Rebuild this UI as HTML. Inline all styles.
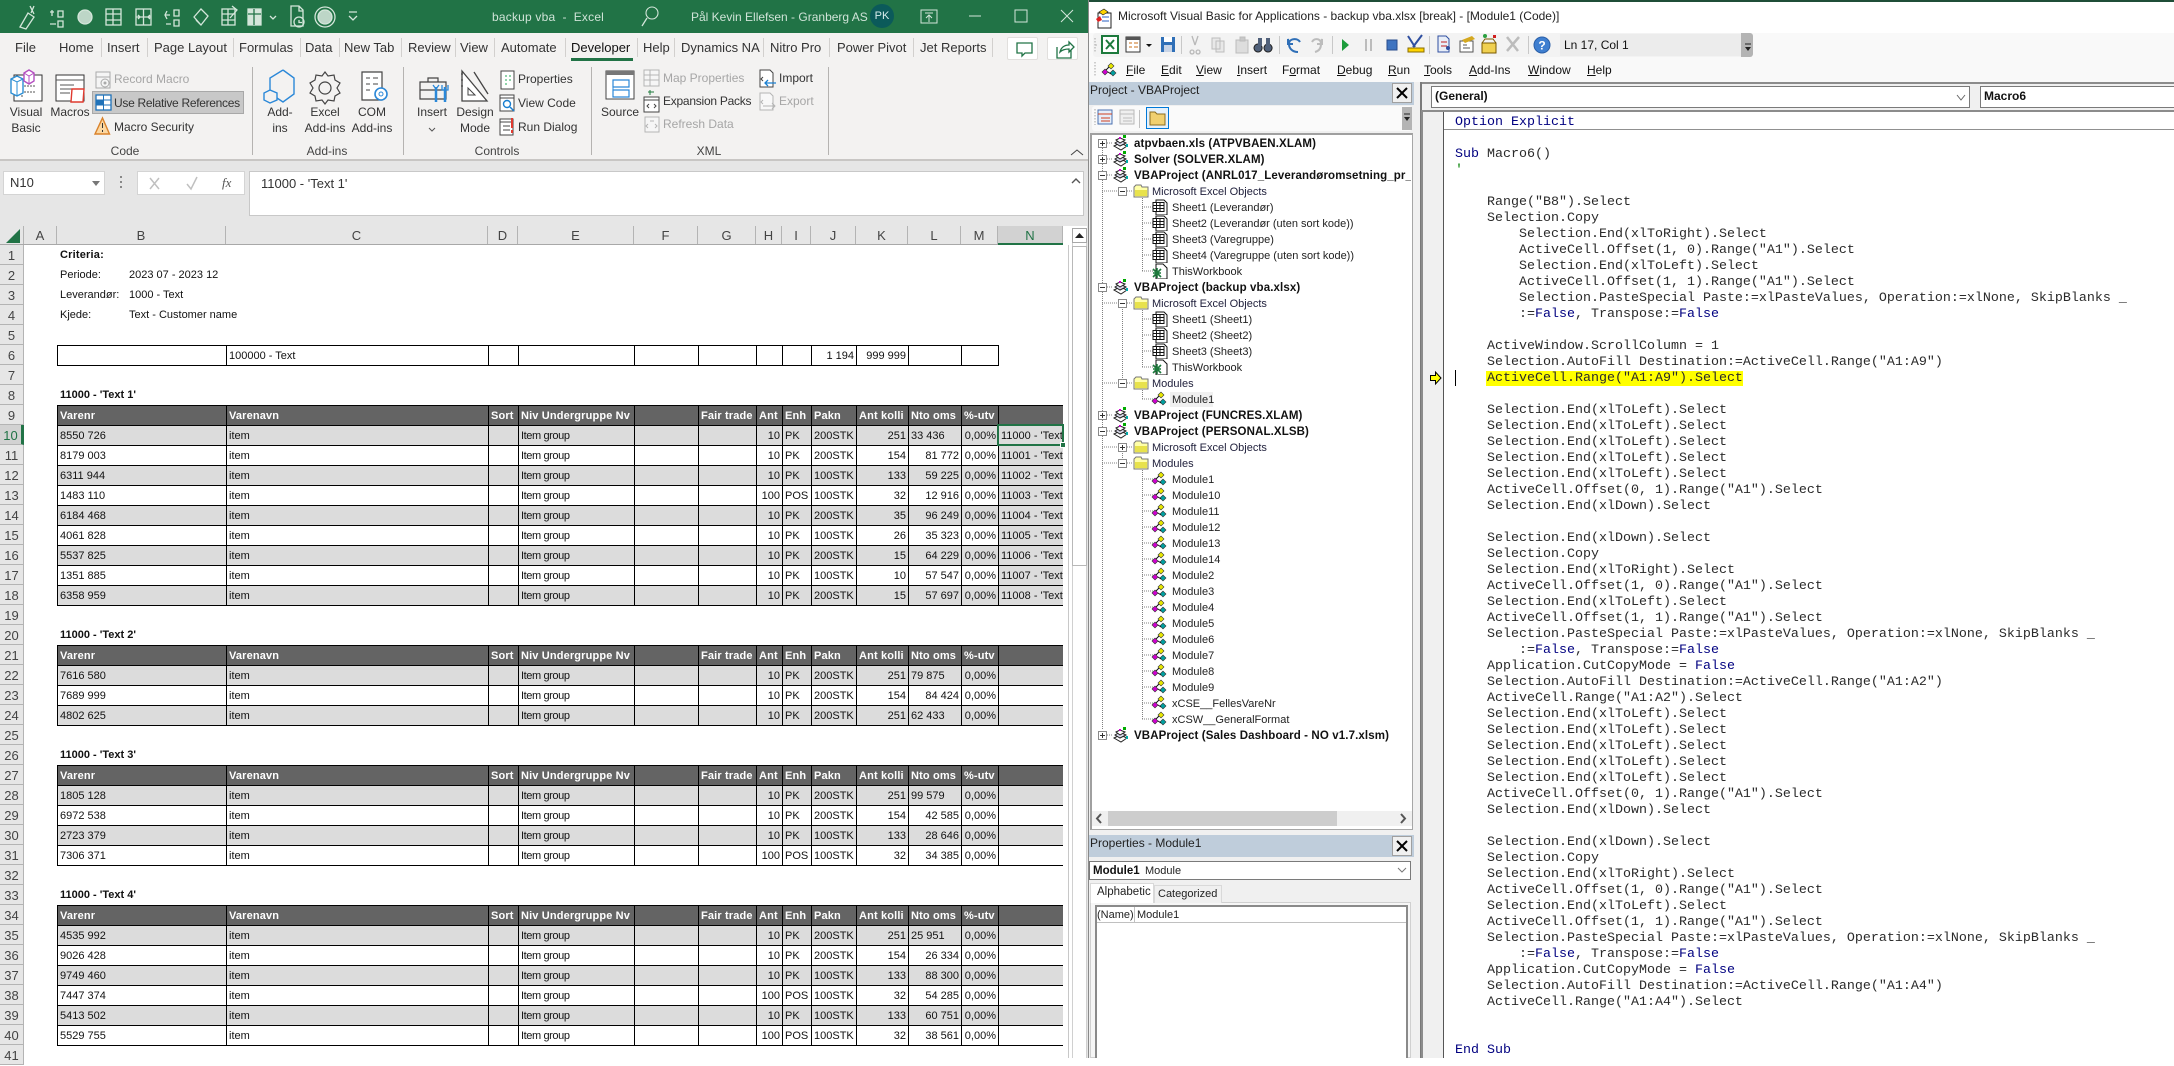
<!DOCTYPE html>
<html><head><meta charset="utf-8"><title>backup vba - Excel</title>
<style>
*{box-sizing:border-box}
html,body{margin:0;padding:0}
body{width:2174px;height:1058px;overflow:hidden;background:#fff;font:12px "Liberation Sans",sans-serif;position:relative;color:#222}
.a{position:absolute}
.t{position:absolute;white-space:nowrap;line-height:16px}
.c{transform:translateX(-50%)}
.g{position:absolute;left:57px;border-collapse:separate;border-spacing:0;table-layout:fixed;width:1006px;font-size:11px;color:#111}
.g td{height:20px;padding:0 2px;border-left:1px solid #000;border-top:1px solid #000;overflow:hidden;white-space:nowrap;line-height:18px}
.g tr:last-child td{border-bottom:1px solid #000;height:21px}
.g .h td{background:#646464;color:#fff;font-weight:bold;letter-spacing:.15px}
.g .z td{background:#dcdcdc}
.g .r{text-align:right}
.g td.n{background:#dcdcdc}
.g tr:not(.h) td:nth-child(4){letter-spacing:-.4px}
.tb{font-size:13px;color:#333}
.rb{font-size:12px;color:#333}
.dis{color:#a6a6a6}
.grp{font-size:12px;color:#444}
#rh{position:absolute;left:0;top:245px;width:24px}
#rh div{height:20px;background:#e6e6e6;border-bottom:1px solid #b4b4b4;border-right:1px solid #b4b4b4;text-align:center;font-size:13px;line-height:21px;color:#444}
#rh div.s{background:#d2d2d2;color:#217346;border-right:3px solid #217346}
#ch{position:absolute;left:0;top:226px;height:19px;display:flex;background:#e6e6e6;border-bottom:1px solid #a8a8a8;width:1063px}
#ch div{height:18px;border-right:1px solid #b4b4b4;text-align:center;font-size:13px;line-height:19px;color:#444}
.m{font-size:12px;color:#111}
.m u{text-decoration:underline}
.tr{font-size:11px;color:#222;margin-top:1px}
.tr.b{font-size:11.5px;font-weight:bold;color:#111;letter-spacing:.12px}
.tr.k{color:#1e1e3a}
pre{position:absolute;margin:0;left:1455px;top:115px;font:13.333px/16px "Liberation Mono",monospace;color:#2a2a2a}
pre b{font-weight:normal;color:#000080}
pre i{font-style:normal;color:#008000}
</style></head><body>

<!-- EXCEL CHROME -->
<div class="a" style="left:0;top:0;width:1089px;height:33px;background:#217346"></div>
<div class="a" style="left:0;top:33px;width:1089px;height:126px;background:#f3f2f1"></div>
<div class="a" style="left:0;top:159px;width:1089px;height:2px;background:#c8c6c4"></div>
<div class="a" style="left:0;top:161px;width:1089px;height:65px;background:#e6e6e6"></div>
<div class="t" style="left:492px;top:9px;color:#cfe3d7;font-size:12px;letter-spacing:.2px">backup vba&nbsp; -&nbsp; Excel</div>
<div class="t" style="left:691px;top:9px;color:#cfe3d7;font-size:12px">Pål Kevin Ellefsen - Granberg AS</div>
<div class="a" style="left:870px;top:4px;width:24px;height:24px;border-radius:50%;background:#0b5a5a"></div>
<div class="t c" style="left:882px;top:8px;color:#d8ecec;font-size:11px">PK</div>

<div class="t tb" style="left:15px;top:40px">File</div>
<div class="t tb" style="left:59px;top:40px">Home</div>
<div class="t tb" style="left:107px;top:40px">Insert</div>
<div class="t tb" style="left:154px;top:40px">Page Layout</div>
<div class="t tb" style="left:239px;top:40px">Formulas</div>
<div class="t tb" style="left:305px;top:40px">Data</div>
<div class="t tb" style="left:344px;top:40px">New Tab</div>
<div class="t tb" style="left:408px;top:40px">Review</div>
<div class="t tb" style="left:460px;top:40px">View</div>
<div class="t tb" style="left:501px;top:40px">Automate</div>
<div class="t tb" style="left:571px;top:40px;color:#111">Developer</div>
<div class="t tb" style="left:643px;top:40px">Help</div>
<div class="t tb" style="left:681px;top:40px;width:82px;overflow:hidden">Dynamics NA</div>
<div class="t tb" style="left:770px;top:40px">Nitro Pro</div>
<div class="t tb" style="left:837px;top:40px">Power Pivot</div>
<div class="t tb" style="left:920px;top:40px">Jet Reports</div>
<div class="a" style="left:571px;top:58px;width:62px;height:3px;background:#217346"></div>
<div class="a" style="left:1007px;top:37px;width:31px;height:23px;background:#fff;border:1px solid #e1dfdd;border-radius:2px"></div>
<div class="a" style="left:1047px;top:37px;width:31px;height:23px;background:#fff;border:1px solid #e1dfdd;border-radius:2px"></div>

<!-- Ribbon labels -->
<div class="t rb c" style="left:26px;top:104px">Visual</div><div class="t rb c" style="left:26px;top:120px">Basic</div>
<div class="t rb c" style="left:70px;top:104px">Macros</div>
<div class="a" style="left:92px;top:91px;width:152px;height:23px;background:#c8c8c8;border:1px solid #a8a8a8"></div>
<div class="t rb dis" style="left:114px;top:71px">Record Macro</div>
<div class="t rb" style="left:114px;top:95px;letter-spacing:-.3px">Use Relative References</div>
<div class="t rb" style="left:114px;top:119px">Macro Security</div>
<div class="t grp c" style="left:125px;top:143px">Code</div>
<div class="t rb c" style="left:280px;top:104px">Add-</div><div class="t rb c" style="left:280px;top:120px">ins</div>
<div class="t rb c" style="left:325px;top:104px">Excel</div><div class="t rb c" style="left:325px;top:120px">Add-ins</div>
<div class="t rb c" style="left:372px;top:104px">COM</div><div class="t rb c" style="left:372px;top:120px">Add-ins</div>
<div class="t grp c" style="left:327px;top:143px">Add-ins</div>
<div class="t rb c" style="left:432px;top:104px">Insert</div>
<div class="t rb c" style="left:475px;top:104px">Design</div><div class="t rb c" style="left:475px;top:120px">Mode</div>
<div class="t rb" style="left:518px;top:71px">Properties</div>
<div class="t rb" style="left:518px;top:95px">View Code</div>
<div class="t rb" style="left:518px;top:119px">Run Dialog</div>
<div class="t grp c" style="left:497px;top:143px">Controls</div>
<div class="t rb c" style="left:620px;top:104px">Source</div>
<div class="t rb dis" style="left:663px;top:70px">Map Properties</div>
<div class="t rb" style="left:663px;top:93px;letter-spacing:-.25px">Expansion Packs</div>
<div class="t rb dis" style="left:663px;top:116px">Refresh Data</div>
<div class="t rb" style="left:779px;top:70px">Import</div>
<div class="t rb dis" style="left:779px;top:93px">Export</div>
<div class="t grp c" style="left:709px;top:143px">XML</div>

<!-- Formula bar -->
<div class="a" style="left:3px;top:171px;width:102px;height:24px;background:#fff;border:1px solid #d4d4d4"></div>
<div class="t" style="left:10px;top:175px;font-size:13px;color:#333">N10</div>
<div class="a" style="left:137px;top:171px;width:108px;height:24px;background:#fff;border:1px solid #d4d4d4"></div>
<div class="t" style="left:222px;top:175px;font:italic 13px 'Liberation Serif',serif;color:#555">fx</div>
<div class="a" style="left:249px;top:171px;width:835px;height:45px;background:#fff;border:1px solid #c8c8c8"></div>
<div class="t" style="left:261px;top:176px;font-size:13px;color:#333">11000 - 'Text 1'</div>

<!-- Sheet headers -->
<div id="ch"><div style="width:24px"></div><div style="width:33px">A</div><div style="width:169px">B</div><div style="width:262px">C</div><div style="width:30px">D</div><div style="width:116px">E</div><div style="width:64px">F</div><div style="width:58px">G</div><div style="width:26px">H</div><div style="width:29px">I</div><div style="width:45px">J</div><div style="width:52px">K</div><div style="width:53px">L</div><div style="width:37px">M</div><div style="width:65px;background:#d2d2d2;color:#217346">N</div></div>
<div class="a" style="left:998px;top:243px;width:65px;height:2px;background:#217346"></div>
<div id="rh"><div>1</div><div>2</div><div>3</div><div>4</div><div>5</div><div>6</div><div>7</div><div>8</div><div>9</div><div class="s">10</div><div>11</div><div>12</div><div>13</div><div>14</div><div>15</div><div>16</div><div>17</div><div>18</div><div>19</div><div>20</div><div>21</div><div>22</div><div>23</div><div>24</div><div>25</div><div>26</div><div>27</div><div>28</div><div>29</div><div>30</div><div>31</div><div>32</div><div>33</div><div>34</div><div>35</div><div>36</div><div>37</div><div>38</div><div>39</div><div>40</div><div>41</div></div>
<div class="a" style="left:1068px;top:245px;width:1px;height:813px;background:#c8c8c8"></div>
<div class="a" style="left:1072px;top:228px;width:15px;height:830px;background:#fff;border:1px solid #d0d0d0;border-top:none;border-bottom:none"></div>
<div class="a" style="left:1072px;top:228px;width:15px;height:15px;background:#fff;border:1px solid #a8a8a8"></div>
<div class="a" style="left:1072px;top:246px;width:15px;height:320px;background:#fff;border:1px solid #b8b8b8"></div>
<div class="a" style="left:1087px;top:226px;width:2px;height:832px;background:#e6e6e6"></div>

<!-- Sheet content -->
<div class="t" style="left:60px;top:247px;font-size:11px;font-weight:bold;color:#111;letter-spacing:.2px">Criteria:</div>
<div class="t" style="left:60px;top:267px;font-size:11px;color:#111">Periode:</div><div class="t" style="left:129px;top:267px;font-size:11px;color:#111">2023 07 - 2023 12</div>
<div class="t" style="left:60px;top:287px;font-size:11px;color:#111">Leverandør:</div><div class="t" style="left:129px;top:287px;font-size:11px;color:#111">1000 - Text</div>
<div class="t" style="left:60px;top:307px;font-size:11px;color:#111">Kjede:</div><div class="t" style="left:129px;top:307px;font-size:11px;color:#111">Text - Customer name</div>

<table class="g" style="top:345px;width:942px"><colgroup><col style="width:169px"><col style="width:262px"><col style="width:30px"><col style="width:116px"><col style="width:64px"><col style="width:58px"><col style="width:26px"><col style="width:29px"><col style="width:45px"><col style="width:52px"><col style="width:53px"><col style="width:38px"></colgroup>
<tr><td></td><td>100000 - Text</td><td></td><td></td><td></td><td></td><td></td><td></td><td class="r">1 194</td><td class="r">999 999</td><td></td><td style="border-right:1px solid #000"></td></tr></table>

<div class="t" style="left:60px;top:387px;font-size:11px;font-weight:bold;color:#111">11000 - 'Text 1'</div>
<table class="g" style="top:405px"><colgroup><col style="width:169px"><col style="width:262px"><col style="width:30px"><col style="width:116px"><col style="width:64px"><col style="width:58px"><col style="width:26px"><col style="width:29px"><col style="width:45px"><col style="width:52px"><col style="width:53px"><col style="width:37px"><col style="width:65px"></colgroup>
<tr class="h"><td>Varenr</td><td>Varenavn</td><td>Sort</td><td>Niv Undergruppe Nv</td><td></td><td>Fair trade</td><td>Ant</td><td>Enh</td><td>Pakn</td><td>Ant kolli</td><td>Nto oms</td><td>%-utv</td><td></td></tr>
<tr class="z"><td>8550 726</td><td>item</td><td></td><td>Item group</td><td></td><td></td><td class="r">10</td><td>PK</td><td>200STK</td><td class="r">251</td><td>33 436</td><td class="r">0,00%</td><td class="n">11000 - 'Text 1'</td></tr>
<tr><td>8179 003</td><td>item</td><td></td><td>Item group</td><td></td><td></td><td class="r">10</td><td>PK</td><td>200STK</td><td class="r">154</td><td class="r">81 772</td><td class="r">0,00%</td><td class="n">11001 - 'Text 2'</td></tr>
<tr class="z"><td>6311 944</td><td>item</td><td></td><td>Item group</td><td></td><td></td><td class="r">10</td><td>PK</td><td>100STK</td><td class="r">133</td><td class="r">59 225</td><td class="r">0,00%</td><td class="n">11002 - 'Text 3'</td></tr>
<tr><td>1483 110</td><td>item</td><td></td><td>Item group</td><td></td><td></td><td class="r">100</td><td>POS</td><td>100STK</td><td class="r">32</td><td class="r">12 916</td><td class="r">0,00%</td><td class="n">11003 - 'Text 4'</td></tr>
<tr class="z"><td>6184 468</td><td>item</td><td></td><td>Item group</td><td></td><td></td><td class="r">10</td><td>PK</td><td>200STK</td><td class="r">35</td><td class="r">96 249</td><td class="r">0,00%</td><td class="n">11004 - 'Text 5'</td></tr>
<tr><td>4061 828</td><td>item</td><td></td><td>Item group</td><td></td><td></td><td class="r">10</td><td>PK</td><td>100STK</td><td class="r">26</td><td class="r">35 323</td><td class="r">0,00%</td><td class="n">11005 - 'Text 6'</td></tr>
<tr class="z"><td>5537 825</td><td>item</td><td></td><td>Item group</td><td></td><td></td><td class="r">10</td><td>PK</td><td>200STK</td><td class="r">15</td><td class="r">64 229</td><td class="r">0,00%</td><td class="n">11006 - 'Text 7'</td></tr>
<tr><td>1351 885</td><td>item</td><td></td><td>Item group</td><td></td><td></td><td class="r">10</td><td>PK</td><td>100STK</td><td class="r">10</td><td class="r">57 547</td><td class="r">0,00%</td><td class="n">11007 - 'Text 8'</td></tr>
<tr class="z"><td>6358 959</td><td>item</td><td></td><td>Item group</td><td></td><td></td><td class="r">10</td><td>PK</td><td>200STK</td><td class="r">15</td><td class="r">57 697</td><td class="r">0,00%</td><td class="n">11008 - 'Text 9'</td></tr>
</table>
<div class="a" style="left:997px;top:424px;width:67px;height:22px;border:2px solid #217346"></div>
<div class="a" style="left:1060px;top:442px;width:6px;height:6px;background:#217346;border:1px solid #fff"></div>

<div class="t" style="left:60px;top:627px;font-size:11px;font-weight:bold;color:#111">11000 - 'Text 2'</div>
<table class="g" style="top:645px"><colgroup><col style="width:169px"><col style="width:262px"><col style="width:30px"><col style="width:116px"><col style="width:64px"><col style="width:58px"><col style="width:26px"><col style="width:29px"><col style="width:45px"><col style="width:52px"><col style="width:53px"><col style="width:37px"><col style="width:65px"></colgroup>
<tr class="h"><td>Varenr</td><td>Varenavn</td><td>Sort</td><td>Niv Undergruppe Nv</td><td></td><td>Fair trade</td><td>Ant</td><td>Enh</td><td>Pakn</td><td>Ant kolli</td><td>Nto oms</td><td>%-utv</td><td></td></tr>
<tr class="z"><td>7616 580</td><td>item</td><td></td><td>Item group</td><td></td><td></td><td class="r">10</td><td>PK</td><td>200STK</td><td class="r">251</td><td>79 875</td><td class="r">0,00%</td><td></td></tr>
<tr><td>7689 999</td><td>item</td><td></td><td>Item group</td><td></td><td></td><td class="r">10</td><td>PK</td><td>200STK</td><td class="r">154</td><td class="r">84 424</td><td class="r">0,00%</td><td></td></tr>
<tr class="z"><td>4802 625</td><td>item</td><td></td><td>Item group</td><td></td><td></td><td class="r">10</td><td>PK</td><td>200STK</td><td class="r">251</td><td>62 433</td><td class="r">0,00%</td><td></td></tr>
</table>

<div class="t" style="left:60px;top:747px;font-size:11px;font-weight:bold;color:#111">11000 - 'Text 3'</div>
<table class="g" style="top:765px"><colgroup><col style="width:169px"><col style="width:262px"><col style="width:30px"><col style="width:116px"><col style="width:64px"><col style="width:58px"><col style="width:26px"><col style="width:29px"><col style="width:45px"><col style="width:52px"><col style="width:53px"><col style="width:37px"><col style="width:65px"></colgroup>
<tr class="h"><td>Varenr</td><td>Varenavn</td><td>Sort</td><td>Niv Undergruppe Nv</td><td></td><td>Fair trade</td><td>Ant</td><td>Enh</td><td>Pakn</td><td>Ant kolli</td><td>Nto oms</td><td>%-utv</td><td></td></tr>
<tr class="z"><td>1805 128</td><td>item</td><td></td><td>Item group</td><td></td><td></td><td class="r">10</td><td>PK</td><td>200STK</td><td class="r">251</td><td>99 579</td><td class="r">0,00%</td><td></td></tr>
<tr><td>6972 538</td><td>item</td><td></td><td>Item group</td><td></td><td></td><td class="r">10</td><td>PK</td><td>200STK</td><td class="r">154</td><td class="r">42 585</td><td class="r">0,00%</td><td></td></tr>
<tr class="z"><td>2723 379</td><td>item</td><td></td><td>Item group</td><td></td><td></td><td class="r">10</td><td>PK</td><td>100STK</td><td class="r">133</td><td class="r">28 646</td><td class="r">0,00%</td><td></td></tr>
<tr><td>7306 371</td><td>item</td><td></td><td>Item group</td><td></td><td></td><td class="r">100</td><td>POS</td><td>100STK</td><td class="r">32</td><td class="r">34 385</td><td class="r">0,00%</td><td></td></tr>
</table>

<div class="t" style="left:60px;top:887px;font-size:11px;font-weight:bold;color:#111">11000 - 'Text 4'</div>
<table class="g" style="top:905px"><colgroup><col style="width:169px"><col style="width:262px"><col style="width:30px"><col style="width:116px"><col style="width:64px"><col style="width:58px"><col style="width:26px"><col style="width:29px"><col style="width:45px"><col style="width:52px"><col style="width:53px"><col style="width:37px"><col style="width:65px"></colgroup>
<tr class="h"><td>Varenr</td><td>Varenavn</td><td>Sort</td><td>Niv Undergruppe Nv</td><td></td><td>Fair trade</td><td>Ant</td><td>Enh</td><td>Pakn</td><td>Ant kolli</td><td>Nto oms</td><td>%-utv</td><td></td></tr>
<tr class="z"><td>4535 992</td><td>item</td><td></td><td>Item group</td><td></td><td></td><td class="r">10</td><td>PK</td><td>200STK</td><td class="r">251</td><td>25 951</td><td class="r">0,00%</td><td></td></tr>
<tr><td>9026 428</td><td>item</td><td></td><td>Item group</td><td></td><td></td><td class="r">10</td><td>PK</td><td>200STK</td><td class="r">154</td><td class="r">26 334</td><td class="r">0,00%</td><td></td></tr>
<tr class="z"><td>9749 460</td><td>item</td><td></td><td>Item group</td><td></td><td></td><td class="r">10</td><td>PK</td><td>100STK</td><td class="r">133</td><td class="r">88 300</td><td class="r">0,00%</td><td></td></tr>
<tr><td>7447 374</td><td>item</td><td></td><td>Item group</td><td></td><td></td><td class="r">100</td><td>POS</td><td>100STK</td><td class="r">32</td><td class="r">54 285</td><td class="r">0,00%</td><td></td></tr>
<tr class="z"><td>5413 502</td><td>item</td><td></td><td>Item group</td><td></td><td></td><td class="r">10</td><td>PK</td><td>100STK</td><td class="r">133</td><td class="r">60 751</td><td class="r">0,00%</td><td></td></tr>
<tr><td>5529 755</td><td>item</td><td></td><td>Item group</td><td></td><td></td><td class="r">100</td><td>POS</td><td>100STK</td><td class="r">32</td><td class="r">38 561</td><td class="r">0,00%</td><td></td></tr>
</table>

<!-- VBE -->
<div class="a" style="left:1089px;top:0;width:1085px;height:2px;background:#1f4d38"></div>
<div class="a" style="left:1089px;top:2px;width:1085px;height:31px;background:#fff"></div>
<div class="a" style="left:1089px;top:33px;width:1085px;height:49px;background:#f9f9f9"></div>
<div class="a" style="left:1089px;top:82px;width:1085px;height:976px;background:#f0f0f0"></div>
<div class="a" style="left:1088px;top:0;width:1px;height:1058px;background:#8a8a8a"></div>
<div class="t" style="left:1118px;top:8px;font-size:12px;color:#222">Microsoft Visual Basic for Applications - backup vba.xlsx [break] - [Module1 (Code)]</div>
<div class="a" style="left:1093px;top:33px;width:660px;height:24px;background:#f3f3f3;border-radius:3px"></div>
<div class="a" style="left:1560px;top:34px;width:181px;height:22px;background:#ececec"></div>
<div class="a" style="left:1741px;top:33px;width:12px;height:24px;background:#b4b4b4;border-radius:0 3px 3px 0"></div>
<div class="t" style="left:1564px;top:37px;font-size:12px;color:#111">Ln 17, Col 1</div>
<div class="t m" style="left:1126px;top:62px"><u>F</u>ile</div>
<div class="t m" style="left:1161px;top:62px"><u>E</u>dit</div>
<div class="t m" style="left:1196px;top:62px"><u>V</u>iew</div>
<div class="t m" style="left:1237px;top:62px"><u>I</u>nsert</div>
<div class="t m" style="left:1282px;top:62px">F<u>o</u>rmat</div>
<div class="t m" style="left:1337px;top:62px"><u>D</u>ebug</div>
<div class="t m" style="left:1388px;top:62px"><u>R</u>un</div>
<div class="t m" style="left:1424px;top:62px"><u>T</u>ools</div>
<div class="t m" style="left:1469px;top:62px"><u>A</u>dd-Ins</div>
<div class="t m" style="left:1528px;top:62px"><u>W</u>indow</div>
<div class="t m" style="left:1587px;top:62px"><u>H</u>elp</div>

<!-- Project pane -->
<div class="a" style="left:1089px;top:82px;width:325px;height:23px;background:#bfcddb"></div>
<div class="t" style="left:1090px;top:82px;font-size:12px;color:#222">Project - VBAProject</div>
<div class="a" style="left:1392px;top:83px;width:20px;height:20px;background:#f0f0f0;border:1px solid #a0a0a0"></div>
<div class="a" style="left:1092px;top:106px;width:320px;height:25px;background:#fafafa;border-radius:3px"></div>
<div class="a" style="left:1402px;top:107px;width:10px;height:23px;background:#b4b4b4"></div>
<div class="a" style="left:1146px;top:107px;width:23px;height:22px;background:#e5f1fb;border:1px solid #0078d7"></div>
<div class="a" style="left:1090px;top:133px;width:323px;height:697px;background:#fff;border:1px solid #a6a6a6;border-top:2px solid #a0a0a0;border-left:2px solid #a0a0a0"></div>
<div class="a" style="left:1170px;top:392px;width:43px;height:15px;background:#f0f0f0"></div>

<div class="t tr b" style="left:1134px;top:135px">atpvbaen.xls (ATPVBAEN.XLAM)</div>
<div class="t tr b" style="left:1134px;top:151px">Solver (SOLVER.XLAM)</div>
<div class="t tr b" style="left:1134px;top:167px;width:277px;overflow:hidden">VBAProject (ANRL017_Leverandøromsetning_pr_kunde.xlsx)</div>
<div class="t tr k" style="left:1152px;top:183px">Microsoft Excel Objects</div>
<div class="t tr" style="left:1172px;top:199px">Sheet1 (Leverandør)</div>
<div class="t tr" style="left:1172px;top:215px">Sheet2 (Leverandør (uten sort kode))</div>
<div class="t tr" style="left:1172px;top:231px">Sheet3 (Varegruppe)</div>
<div class="t tr" style="left:1172px;top:247px">Sheet4 (Varegruppe (uten sort kode))</div>
<div class="t tr" style="left:1172px;top:263px">ThisWorkbook</div>
<div class="t tr b" style="left:1134px;top:279px">VBAProject (backup vba.xlsx)</div>
<div class="t tr k" style="left:1152px;top:295px">Microsoft Excel Objects</div>
<div class="t tr" style="left:1172px;top:311px">Sheet1 (Sheet1)</div>
<div class="t tr" style="left:1172px;top:327px">Sheet2 (Sheet2)</div>
<div class="t tr" style="left:1172px;top:343px">Sheet3 (Sheet3)</div>
<div class="t tr" style="left:1172px;top:359px">ThisWorkbook</div>
<div class="t tr k" style="left:1152px;top:375px">Modules</div>
<div class="t tr" style="left:1172px;top:391px">Module1</div>
<div class="t tr b" style="left:1134px;top:407px">VBAProject (FUNCRES.XLAM)</div>
<div class="t tr b" style="left:1134px;top:423px">VBAProject (PERSONAL.XLSB)</div>
<div class="t tr k" style="left:1152px;top:439px">Microsoft Excel Objects</div>
<div class="t tr k" style="left:1152px;top:455px">Modules</div>
<div class="t tr" style="left:1172px;top:471px">Module1</div>
<div class="t tr" style="left:1172px;top:487px">Module10</div>
<div class="t tr" style="left:1172px;top:503px">Module11</div>
<div class="t tr" style="left:1172px;top:519px">Module12</div>
<div class="t tr" style="left:1172px;top:535px">Module13</div>
<div class="t tr" style="left:1172px;top:551px">Module14</div>
<div class="t tr" style="left:1172px;top:567px">Module2</div>
<div class="t tr" style="left:1172px;top:583px">Module3</div>
<div class="t tr" style="left:1172px;top:599px">Module4</div>
<div class="t tr" style="left:1172px;top:615px">Module5</div>
<div class="t tr" style="left:1172px;top:631px">Module6</div>
<div class="t tr" style="left:1172px;top:647px">Module7</div>
<div class="t tr" style="left:1172px;top:663px">Module8</div>
<div class="t tr" style="left:1172px;top:679px">Module9</div>
<div class="t tr" style="left:1172px;top:695px">xCSE__FellesVareNr</div>
<div class="t tr" style="left:1172px;top:711px">xCSW__GeneralFormat</div>
<div class="t tr b" style="left:1134px;top:727px">VBAProject (Sales Dashboard - NO v1.7.xlsm)</div>

<div class="a" style="left:1092px;top:811px;width:320px;height:15px;background:#f0f0f0"></div>
<div class="a" style="left:1108px;top:811px;width:229px;height:15px;background:#cdcdcd"></div>

<!-- Properties pane -->
<div class="a" style="left:1089px;top:835px;width:325px;height:22px;background:#bfcddb"></div>
<div class="t" style="left:1090px;top:835px;font-size:12px;color:#222">Properties - Module1</div>
<div class="a" style="left:1392px;top:836px;width:20px;height:20px;background:#f0f0f0;border:1px solid #a0a0a0"></div>
<div class="a" style="left:1089px;top:861px;width:322px;height:19px;background:#fff;border:1px solid #7a7a7a"></div>
<div class="t" style="left:1093px;top:863px;font-size:11.5px;font-weight:bold;color:#111">Module1</div>
<div class="t" style="left:1145px;top:863px;font-size:11px;color:#222">Module</div>
<div class="a" style="left:1090px;top:902px;width:321px;height:156px;background:#f6f6f6;border:1px solid #d0d0d0"></div>
<div class="a" style="left:1154px;top:885px;width:68px;height:18px;background:#f0f0f0;border:1px solid #d9d9d9;border-bottom:none"></div>
<div class="a" style="left:1090px;top:883px;width:64px;height:20px;background:#fff;border:1px solid #d9d9d9;border-bottom:none"></div>
<div class="t" style="left:1097px;top:884px;font-size:11.5px;color:#222">Alphabetic</div>
<div class="t" style="left:1158px;top:886px;font-size:11px;color:#222">Categorized</div>
<div class="a" style="left:1095px;top:905px;width:313px;height:153px;background:#fff;border:2px solid #8a8a8a;border-bottom:none"></div>
<div class="a" style="left:1097px;top:922px;width:309px;height:1px;background:#c0c0c0"></div>
<div class="a" style="left:1134px;top:907px;width:1px;height:15px;background:#c0c0c0"></div>
<div class="t" style="left:1097px;top:907px;font-size:11px;color:#222">(Name)</div>
<div class="t" style="left:1137px;top:907px;font-size:11px;color:#222">Module1</div>

<div class="a" style="left:1420px;top:82px;width:2px;height:976px;background:#7a7a7a"></div>

<!-- Code pane -->
<div class="a" style="left:1422px;top:82px;width:752px;height:2px;background:#8c8c8c"></div>
<div class="a" style="left:1431px;top:86px;width:539px;height:22px;background:#fff;border:1px solid #7a7a7a"></div>
<div class="t" style="left:1435px;top:88px;font-size:12px;font-weight:bold;color:#111">(General)</div>
<div class="a" style="left:1980px;top:86px;width:194px;height:22px;background:#fff;border:1px solid #7a7a7a;border-right:none"></div>
<div class="t" style="left:1984px;top:88px;font-size:12px;font-weight:bold;color:#111">Macro6</div>
<div class="a" style="left:1421px;top:110px;width:753px;height:948px;background:#fff;border-top:2px solid #8c8c8c;border-left:2px solid #8c8c8c"></div>
<div class="a" style="left:1423px;top:112px;width:20px;height:946px;background:#f0f0f0"></div>
<div class="a" style="left:1443px;top:112px;width:1px;height:946px;background:#555"></div>
<div class="a" style="left:1444px;top:129px;width:730px;height:1px;background:#909090"></div>
<div class="a" style="left:1486px;top:371px;width:257px;height:15px;background:#ffff00"></div>
<div class="a" style="left:1455px;top:370px;width:1px;height:16px;background:#000"></div>
<pre><b>Option Explicit</b>

<b>Sub</b> Macro6()
<i>'</i>

    Range("B8").Select
    Selection.Copy
        Selection.End(xlToRight).Select
        ActiveCell.Offset(1, 0).Range("A1").Select
        Selection.End(xlToLeft).Select
        ActiveCell.Offset(1, 1).Range("A1").Select
        Selection.PasteSpecial Paste:=xlPasteValues, Operation:=xlNone, SkipBlanks _
        :=<b>False</b>, Transpose:=<b>False</b>

    ActiveWindow.ScrollColumn = 1
    Selection.AutoFill Destination:=ActiveCell.Range("A1:A9")
    ActiveCell.Range("A1:A9").Select

    Selection.End(xlToLeft).Select
    Selection.End(xlToLeft).Select
    Selection.End(xlToLeft).Select
    Selection.End(xlToLeft).Select
    Selection.End(xlToLeft).Select
    ActiveCell.Offset(0, 1).Range("A1").Select
    Selection.End(xlDown).Select

    Selection.End(xlDown).Select
    Selection.Copy
    Selection.End(xlToRight).Select
    ActiveCell.Offset(1, 0).Range("A1").Select
    Selection.End(xlToLeft).Select
    ActiveCell.Offset(1, 1).Range("A1").Select
    Selection.PasteSpecial Paste:=xlPasteValues, Operation:=xlNone, SkipBlanks _
        :=<b>False</b>, Transpose:=<b>False</b>
    Application.CutCopyMode = <b>False</b>
    Selection.AutoFill Destination:=ActiveCell.Range("A1:A2")
    ActiveCell.Range("A1:A2").Select
    Selection.End(xlToLeft).Select
    Selection.End(xlToLeft).Select
    Selection.End(xlToLeft).Select
    Selection.End(xlToLeft).Select
    Selection.End(xlToLeft).Select
    ActiveCell.Offset(0, 1).Range("A1").Select
    Selection.End(xlDown).Select

    Selection.End(xlDown).Select
    Selection.Copy
    Selection.End(xlToRight).Select
    ActiveCell.Offset(1, 0).Range("A1").Select
    Selection.End(xlToLeft).Select
    ActiveCell.Offset(1, 1).Range("A1").Select
    Selection.PasteSpecial Paste:=xlPasteValues, Operation:=xlNone, SkipBlanks _
        :=<b>False</b>, Transpose:=<b>False</b>
    Application.CutCopyMode = <b>False</b>
    Selection.AutoFill Destination:=ActiveCell.Range("A1:A4")
    ActiveCell.Range("A1:A4").Select


<b>End Sub</b></pre>

<!-- ICON OVERLAY -->
<svg class="a" style="left:0;top:0;pointer-events:none" width="2174" height="1058" viewBox="0 0 2174 1058" fill="none">
<defs>
<symbol id="p" viewBox="0 0 9 9" width="9" height="9"><rect x=".5" y=".5" width="8" height="8" fill="#fff" stroke="#8a8a8a"/><path d="M2 4.5h5M4.5 2v5" stroke="#333"/></symbol>
<symbol id="n" viewBox="0 0 9 9" width="9" height="9"><rect x=".5" y=".5" width="8" height="8" fill="#fff" stroke="#8a8a8a"/><path d="M2 4.5h5" stroke="#333"/></symbol>
<symbol id="pj" viewBox="0 0 16 16" width="16" height="16"><path d="M1 11l6-3 7 3-6 4z" fill="#fff" stroke="#222"/><path d="M2 8l5-3 6 3-6 3z" fill="#dde" stroke="#222"/><path d="M3 5l4-2 5 2-5 3z" fill="#fff" stroke="#222"/><rect x="10" y="0" width="3" height="3" fill="#0a0"/><rect x="6" y="2" width="2" height="2" fill="#c0c"/><rect x="13" y="9" width="2" height="3" fill="#0aa"/></symbol>
<symbol id="fo" viewBox="0 0 16 16" width="16" height="16"><path d="M1 4l2-2h5l1 2h6v10H1z" fill="#ffffa8" stroke="#777"/><path d="M2 7h12v6H2z" fill="#e8e24c"/></symbol>
<symbol id="sh" viewBox="0 0 16 16" width="16" height="16"><path d="M4 1h8l3 3v12H4z" fill="#fff" stroke="#111"/><path d="M1 3.5h11v9H1z" fill="#fff" stroke="#111"/><path d="M1 6.5h11M1 9.5h11M4.5 3.5v9M8 3.5v9" stroke="#111"/></symbol>
<symbol id="wb" viewBox="0 0 16 16" width="16" height="16"><path d="M4 1h7l4 4v11H4z" fill="#fff" stroke="#111"/><path d="M1 6l8 8M9 6l-8 8M5 5v10M1 10h8" stroke="#1d7a3c" stroke-width="1.6"/></symbol>
<symbol id="m" viewBox="0 0 16 16" width="16" height="16"><path d="M1 10l3-3 3 3-3 3z" fill="#d000d0" stroke="#333" stroke-width=".6"/><path d="M7 4l3-3 3 3-3 3z" fill="#e8e800" stroke="#333" stroke-width=".6"/><path d="M9 11l3-3 3 3-3 3z" fill="#00a0a0" stroke="#333" stroke-width=".6"/><path d="M5 8l3-3M7 10l3 2" stroke="#111"/></symbol>
</defs>

<!-- QAT -->
<g stroke="#d4e6da" stroke-width="1.3">
<path d="M20 27l8-14 6 4-8 12zM30 6l4 8M34 6l-3 7" />
<path d="M50 12h4M52 10v6M50 24h6M58 11h5v6h-5zM58 21h5v6h-5z"/>
<circle cx="85" cy="17" r="7" fill="#bdd6c7"/>
<rect x="106" y="9" width="15" height="16"/><path d="M106 14h15M106 20h15M113 9v16"/>
<rect x="136" y="9" width="15" height="16"/><path d="M136 17h15M143.5 9v16M140 17l-2 2m2-2l-2-2M148 17l2 2m-2-2l2-2"/>
<path d="M165 15h5M167 11l-2 4 2 4M174 10h5v6h-5zM174 20h5v6h-5zM166 24h5"/>
<path d="M194 17l7-8 7 7-7 9zM196 20l5 5"/>
<rect x="222" y="9" width="13" height="16"/><path d="M222 14h13M222 20h13M228 9v16M232 6l5 4-7 8"/>
<rect x="248" y="9" width="13" height="16" fill="#d4e6da"/><path d="M254 9v16M248 14h13" stroke="#217346"/>
<path d="M270 16l3 3 3-3"/>
<path d="M291 6h8l4 4v16h-12zM299 6v5h4"/><circle cx="299" cy="22" r="5"/><path d="M299 20v2.500h3"/>
<circle cx="325" cy="17" r="7" fill="#bdd6c7"/><circle cx="325" cy="17" r="10"/>
<path d="M349 12h8M349 16l4 4 4-4"/>
<circle cx="652" cy="13" r="6" stroke-width="1.100"/><path d="M647 18l-5 8"/>
<path d="M921 10h16v13h-16zM925 13h8M929 22v-7M926 18l3-3 3 3" stroke-width="1"/>
<path d="M969 16h12M1015 10h12v12h-12zM1061 10l12 12M1073 10l-12 12" stroke-width="1"/>
</g>

<!-- comment / share -->
<path d="M1017 43h15v10h-7l-3 3v-3h-5z" stroke="#217346" stroke-width="1.300"/>
<path d="M1057 47v11h14v-8M1060 52c1-5 5-7 9-7v-3l5 5-5 5v-3c-4 0-7 1-9 3z" stroke="#217346" stroke-width="1.300"/>

<!-- ribbon separators -->
<path d="M101.500 38v19M147.500 38v19M233.500 38v19M300.500 38v19M339.500 38v19M401.500 38v19M455.500 38v19M494.500 38v19M565.500 38v19M637.500 38v19M674.500 38v19M763.500 38v19M829.500 38v19M913.500 38v19M992.500 38v19" stroke="#d2d0ce"/>
<path d="M252.500 67v88M403.500 67v88M591.500 67v88M828.500 67v88" stroke="#b5b3b1"/>
<path d="M1071 155l6-5 6 5" stroke="#444"/>

<!-- Visual Basic icon -->
<path d="M14 75h28v26H14z" fill="#fff" stroke="#333"/><path d="M18 86h18M18 92h18M22 89v8" stroke="#555" stroke-dasharray="2 1"/>
<path d="M11 79l6-3 6 3v14l-6 3-6-3z" fill="#fff" stroke="#2a8dd4" stroke-width="1.400"/><path d="M11 79l6 3 6-3M17 82v14" stroke="#2a8dd4"/>
<path d="M24 73l5-3 5 3v8l-5 3-5-3z" fill="#fff" stroke="#b44fc0" stroke-width="1.400"/><path d="M24 73l5 3 5-3M29 76v8" stroke="#b44fc0"/>
<!-- Macros icon -->
<path d="M56 75h28v26H56z" fill="#fff" stroke="#333"/><path d="M56 80h28M60 85h14M60 89h14M60 93h10" stroke="#555"/>
<path d="M72 89h12l-1 13H71z" fill="#fff" stroke="#e03a2f" stroke-width="1.400"/>
<!-- Record Macro -->
<path d="M96 72h14v16H96z" fill="#f5f5f5" stroke="#aaa"/><path d="M96 77h14" stroke="#aaa"/><circle cx="105" cy="83" r="4" stroke="#aaa"/><circle cx="105" cy="83" r="1.500" fill="#aaa"/>
<!-- Relative -->
<rect x="96" y="95" width="15" height="15" fill="#fff" stroke="#2072b9" stroke-width="1.300"/><path d="M96 100h15M96 105h15M103.500 95v15" stroke="#2072b9"/><rect x="96" y="100" width="7.500" height="5" fill="#2072b9"/>
<!-- Macro Security -->
<path d="M102.500 118l7 16H95z" fill="#fcd7a0" stroke="#d9822b" stroke-width="1.400"/><path d="M102.500 123v5M102.500 130v2" stroke="#333"/>
<!-- Add-ins -->
<path d="M283 70l11 8 0 16-11 8-6-4" stroke="#2b88d8" stroke-width="1.400"/><path d="M283 70l-13 8v12M270 90l7 3v7l-7 3-6-3v-7z" stroke="#2b88d8" stroke-width="1.400"/>
<path d="M325 72l3 4 6-1 1 5 5 3-3 5 3 5-5 3-1 5-6-1-3 4-3-4-6 1-1-5-5-3 3-5-3-5 5-3 1-5 6 1z" stroke="#444" stroke-width="1.200"/><circle cx="325" cy="88" r="6" stroke="#444" stroke-width="1.200"/>
<path d="M362 72h20v28h-20z" stroke="#444" fill="#fff" stroke-width="1.200"/><path d="M366 78h4M366 84h4M366 90h4M373 78h5M373 84h5" stroke="#444"/>
<circle cx="381" cy="94" r="6" fill="#fff" stroke="#2b88d8" stroke-width="1.600"/><circle cx="381" cy="94" r="2" stroke="#2b88d8"/>
<!-- Controls -->
<path d="M420 82h26v17h-26zM428 82v-4h10v4M420 90h26" stroke="#444" stroke-width="1.200"/>
<path d="M436 87v15M445 87v15" stroke="#2b88d8" stroke-width="2.500"/><path d="M433 85l3 4 3-4M442 85v5h6v-5" stroke="#2b88d8" stroke-width="1.300"/>
<path d="M462 71v30h25z" fill="#fff" stroke="#444" stroke-width="1.300"/><path d="M468 88v7h7z" stroke="#444"/><path d="M461 74h2M461 80h2M461 86h2" stroke="#444"/>
<path d="M474 72l14 22" stroke="#444" stroke-width="1.300"/>
<path d="M429 128l3 3 3-3" stroke="#555"/>
<rect x="501" y="71" width="13" height="18" fill="#fff" stroke="#444"/><path d="M505 76h2M505 80h2M505 84h2M509 76h2M509 80h2" stroke="#2a5"/>
<rect x="500" y="95" width="14" height="16" fill="#fff" stroke="#444"/><path d="M500 98h14" stroke="#444"/><circle cx="507" cy="104" r="3.500" stroke="#1a7fd0" stroke-width="1.400"/><path d="M510 107l4 4" stroke="#1a7fd0" stroke-width="1.500"/>
<rect x="500" y="119" width="13" height="16" fill="#fff" stroke="#444"/><path d="M500 122h13M503 126h7M503 130h7" stroke="#444"/><path d="M511 118h2v10h-2zM511 130h2v3h-2z" fill="#e03a2f"/>
<!-- XML -->
<rect x="606" y="71" width="28" height="28" fill="#fff" stroke="#444"/><rect x="606" y="71" width="28" height="4" fill="#777"/>
<path d="M613 80h16v7h-16zM613 90h16v7h-16z" stroke="#2b88d8" stroke-width="1.200"/><path d="M613 84v9" stroke="#2b88d8"/>
<g stroke="#b5b5b5"><rect x="644" y="70" width="15" height="16" fill="#f6f6f6"/><path d="M644 75h15M644 80h15M650 70v16"/><rect x="645" y="117" width="14" height="15" fill="#f6f6f6"/><path d="M648 124l-2 2 2 2M655 124l2 2-2 2M650 121h4"/></g>
<g stroke="#444"><rect x="644" y="97" width="15" height="15" fill="#fff"/><path d="M644 100h15M649 104l-2 2 2 2M654 104l2 2-2 2" /></g><path d="M648 92h6M650 90v5" stroke="#1d7a3c"/>
<g stroke="#444"><path d="M760 70h10l3 3v14h-13z" fill="#fff"/><path d="M763 77l-2 2 2 2"/></g><path d="M776 83h-11m3-3l-3 3 3 3" stroke="#1a7fd0" stroke-width="1.300"/>
<g stroke="#b5b5b5"><path d="M760 93h10l3 3v14h-13z" fill="#f8f8f8"/><path d="M763 100l-2 2 2 2M763 106h7"/><path d="M765 106h10m-3-3l3 3-3 3"/></g>
<!-- Formula bar -->
<path d="M92 181l4 5 4-5z" fill="#777"/>
<path d="M121 176v2M121 181v2M121 186v2" stroke="#888" stroke-width="2"/>
<path d="M150 178l9 11M159 178l-9 11" stroke="#c0c0c0" stroke-width="1.500"/>
<path d="M187 184l4 5 6-12" stroke="#c0c0c0" stroke-width="1.500"/>
<path d="M1072 183l4-4 4 4" stroke="#555" stroke-width="1.400"/>
<!-- sheet corner + scroll arrow -->
<path d="M20 229v14H6z" fill="#217346"/>
<path d="M1075 238l4.500-5 4.500 5z" fill="#222"/>

<!-- VBE title icon -->
<path d="M1098 13h13v15h-13z" fill="#fff" stroke="#222"/><path d="M1099 12l5-3 4 3-5 3z" fill="#ffd400" stroke="#222" stroke-width=".7"/><path d="M1096 19l4-3 2 4-4 2z" fill="#e02020"/><path d="M1102 17h7M1102 21h7" stroke="#2a5fc0"/>

<!-- VBE toolbar -->
<circle cx="1096" cy="45" r=".8" fill="#aaa"/><path d="M1095 38v14M1095 62v15M1095 109v16" stroke="#c0c0c0" stroke-dasharray="1.500 1.500" stroke-width="1.500"/>
<rect x="1102" y="36" width="16" height="17" fill="#fff" stroke="#1d7a3c" stroke-width="2"/><path d="M1106 40l8 9M1114 40l-8 9" stroke="#1d7a3c" stroke-width="2"/>
<rect x="1126" y="37" width="14" height="15" fill="#fff" stroke="#333"/><rect x="1126" y="37" width="14" height="3" fill="#555"/><path d="M1129 43h3M1129 47h3M1134 43h4M1134 47h4" stroke="#c96f1a"/>
<path d="M1146 44h6l-3 3z" fill="#111"/>
<rect x="1161" y="37" width="14" height="15" fill="#2f6fb7"/><rect x="1164" y="37" width="8" height="5" fill="#fff"/><rect x="1164" y="45" width="8" height="7" fill="#c8d4e6"/>
<path d="M1181.500 36v18M1279.500 36v18M1332.500 36v18M1429.500 36v18M1528.500 36v18" stroke="#c8c8c8"/>
<path d="M1192 36l3 9M1198 36l-3 9M1192 50a2 2 0 1 0 .1 0M1198 50a2 2 0 1 0 .1 0" stroke="#b8b8b8" stroke-width="1.300"/>
<path d="M1212 38h8v11h-8zM1216 41h8v11h-8z" fill="#e8e8e8" stroke="#bcbcbc"/>
<path d="M1236 40h12v13h-12z" fill="#ddd" stroke="#bcbcbc"/><path d="M1240 37h5v4h-5z" fill="#c8c8c8" stroke="#bcbcbc"/>
<path d="M1258 44a4 4 0 1 0 .1 0M1268 44a4 4 0 1 0 .1 0" fill="#50607a" stroke="#222"/><path d="M1258 38h4v8h-4zM1266 38h4v8h-4z" fill="#50607a"/>
<path d="M1300 42c-2-4-10-4-11 1l-1-4v5h5M1289 44c0 4 3 8 9 8" stroke="#2f6fb7" stroke-width="2"/>
<path d="M1312 42c2-4 8-4 9 1l1-4v5h-5M1321 44c0 4-2 7-6 8" stroke="#bcbcbc" stroke-width="2"/>
<path d="M1342 39l7 6-7 6z" fill="#1c9c3c"/>
<path d="M1365 39h2v12h-2zM1370 39h2v12h-2z" fill="#bcbcbc"/>
<rect x="1387" y="40" width="10" height="10" fill="#3f74c0" stroke="#284c8c"/>
<path d="M1408 52h16v-4h-16z" fill="#ffd400" stroke="#8a6d00"/><path d="M1408 36l7 11M1422 35l-9 12" stroke="#2f4fa0" stroke-width="2"/>
<path d="M1438 36h8l3 3v13h-11z" fill="#e8eef8" stroke="#2f4fa0"/><path d="M1441 42h6M1441 46h6" stroke="#c02020"/><circle cx="1448" cy="48" r="2" fill="#2f4fa0"/>
<path d="M1460 41h13v11h-13z" fill="#fff" stroke="#555"/><path d="M1462 40l10-4 3 3-10 4z" fill="#d4a820"/><path d="M1463 45h4M1463 48h7" stroke="#555"/>
<path d="M1482 43h14v10h-14z" fill="#f0d050" stroke="#7a5a00"/><path d="M1482 43l3-4h8l3 4" stroke="#7a5a00"/><circle cx="1485" cy="36" r="2" fill="#2aa040"/><rect x="1493" y="35" width="3" height="3" fill="#d02020"/>
<path d="M1507 37l11 14M1519 37l-12 14" stroke="#bcbcbc" stroke-width="2.500"/>
<circle cx="1542" cy="45" r="8" fill="#3f7fd0" stroke="#2a5fa8"/>
<text x="1542" y="49.500" text-anchor="middle" fill="#fff" font-size="12" font-weight="bold" font-family="Liberation Sans">?</text>
<use href="#m" x="1101" y="62"/>
<path d="M1745 47h6l-3 4z" fill="#222"/><path d="M1745 44h6" stroke="#222"/>

<!-- Project pane toolbar -->
<rect x="1098" y="110" width="14" height="14" fill="#e6eefa" stroke="#4a70b0"/><path d="M1098 114h14M1101 118h9M1101 121h9" stroke="#d04020"/>
<rect x="1120" y="110" width="14" height="14" fill="#efefef" stroke="#b8b8b8"/><path d="M1120 114h14M1123 118h9M1123 121h9" stroke="#bcbcbc"/>
<path d="M1139.500 110v18" stroke="#c0c0c0"/>
<path d="M1150 112h5l2 2h8v11h-15z" fill="#f0d070" stroke="#8a6d20"/>
<path d="M1404 117h6l-3 4z" fill="#222"/><path d="M1404 114h6" stroke="#222"/>
<path d="M1397 88l10 10M1407 88l-10 10" stroke="#000" stroke-width="2"/>
<path d="M1397 841l10 10M1407 841l-10 10" stroke="#000" stroke-width="2"/>

<!-- tree dotted -->
<path d="M1102.500 148V730M1122.500 303V383M1122.500 447V463M1142.500 198V271M1142.500 310V367M1142.500 390V399M1142.500 470V719M1107 143h6M1107 159h6M1107 175h6M1107 287h6M1107 415h6M1107 431h6M1107 735h6M1127 191h6M1127 303h6M1127 383h6M1127 447h6M1127 463h6M1102 191h16M1102 303h16M1102 383h16M1102 447h16M1102 463h16M1142 207h11M1142 223h11M1142 239h11M1142 255h11M1142 271h11M1142 319h11M1142 335h11M1142 351h11M1142 367h11M1142 399h11M1142 479h11M1142 495h11M1142 511h11M1142 527h11M1142 543h11M1142 559h11M1142 575h11M1142 591h11M1142 607h11M1142 623h11M1142 639h11M1142 655h11M1142 671h11M1142 687h11M1142 703h11M1142 719h11" stroke="#808080" stroke-dasharray="1 1"/>
<!-- tree boxes -->
<use href="#p" x="1098" y="139"/><use href="#p" x="1098" y="155"/><use href="#n" x="1098" y="171"/><use href="#n" x="1098" y="283"/><use href="#p" x="1098" y="411"/><use href="#n" x="1098" y="427"/><use href="#p" x="1098" y="731"/>
<use href="#n" x="1118" y="187"/><use href="#n" x="1118" y="299"/><use href="#n" x="1118" y="379"/><use href="#p" x="1118" y="443"/><use href="#n" x="1118" y="459"/>
<!-- project icons -->
<use href="#pj" x="1113" y="135"/><use href="#pj" x="1113" y="151"/><use href="#pj" x="1113" y="167"/><use href="#pj" x="1113" y="279"/><use href="#pj" x="1113" y="407"/><use href="#pj" x="1113" y="423"/><use href="#pj" x="1113" y="727"/>
<!-- folders -->
<use href="#fo" x="1133" y="183"/><use href="#fo" x="1133" y="295"/><use href="#fo" x="1133" y="375"/><use href="#fo" x="1133" y="439"/><use href="#fo" x="1133" y="455"/>
<!-- sheets -->
<use href="#sh" x="1152" y="199"/><use href="#sh" x="1152" y="215"/><use href="#sh" x="1152" y="231"/><use href="#sh" x="1152" y="247"/><use href="#wb" x="1152" y="263"/>
<use href="#sh" x="1152" y="311"/><use href="#sh" x="1152" y="327"/><use href="#sh" x="1152" y="343"/><use href="#wb" x="1152" y="359"/>
<!-- modules -->
<use href="#m" x="1151" y="391"/><use href="#m" x="1151" y="471"/><use href="#m" x="1151" y="487"/><use href="#m" x="1151" y="503"/><use href="#m" x="1151" y="519"/><use href="#m" x="1151" y="535"/><use href="#m" x="1151" y="551"/><use href="#m" x="1151" y="567"/><use href="#m" x="1151" y="583"/><use href="#m" x="1151" y="599"/><use href="#m" x="1151" y="615"/><use href="#m" x="1151" y="631"/><use href="#m" x="1151" y="647"/><use href="#m" x="1151" y="663"/><use href="#m" x="1151" y="679"/><use href="#m" x="1151" y="695"/><use href="#m" x="1151" y="711"/>

<!-- scroll arrows / combos -->
<path d="M1101 814l-4 4.500 4 4.500M1401 814l4 4.500-4 4.500" stroke="#555" stroke-width="2"/>
<path d="M1398 868l4 4 4-4" stroke="#777"/>
<path d="M1957 95l4 5 4-5" stroke="#666"/>
<!-- break arrow -->
<path d="M1430.500 375.500h5v-3.500l5.500 6-5.500 6v-3.500h-5z" fill="#ffff00" stroke="#000"/>
</svg>
</body></html>
